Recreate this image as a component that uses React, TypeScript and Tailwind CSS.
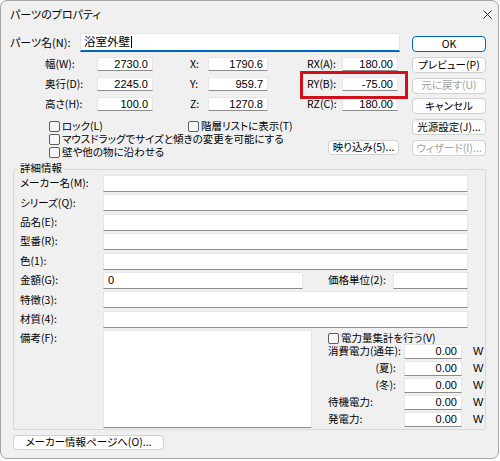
// パーツのプロパティ dialog
import type { ReactNode } from "react";

const num = "font-['Liberation_Sans',Arial,sans-serif] text-[11px]";

function Box({
  w,
  h = "h-[14px]",
  value = "",
  left = false,
  className = "",
}: {
  w: string;
  h?: string;
  value?: string;
  left?: boolean;
  className?: string;
}) {
  return (
    <div
      className={`${w} ${h} shrink-0 bg-white border border-[#e6e6e6] border-b-[#8c8c8c] flex items-center ${
        left ? "justify-start pl-[4px]" : "justify-end pr-[4px]"
      } ${num} ${className}`}
    >
      {value}
    </div>
  );
}

function Check({ children }: { children: ReactNode }) {
  return (
    <div className="flex items-center gap-[2px] whitespace-nowrap h-[12px]">
      <span className="w-[11px] h-[11px] shrink-0 rounded-[2px] border border-[#5e5e5e] bg-[#f7f7f7]" />
      <span className="text-[10.5px] leading-[12px]">{children}</span>
    </div>
  );
}

function Btn({
  children,
  w = "w-[74px]",
  h = "h-[16px]",
  primary = false,
  disabled = false,
  className = "",
}: {
  children: ReactNode;
  w?: string;
  h?: string;
  primary?: boolean;
  disabled?: boolean;
  className?: string;
}) {
  return (
    <div
      className={`${w} ${h} shrink-0 rounded-[4px] flex items-center justify-center whitespace-nowrap ${
        primary
          ? "border-[1.5px] border-[#0067c0] bg-[#fdfdfd]"
          : "border border-[#d2d2d2] bg-[#fdfdfd]"
      } ${disabled ? "text-[#a3a3a3]" : "text-black"} ${className}`}
    >
      {children}
    </div>
  );
}

function CoordRow({
  a,
  av,
  b,
  bv,
  c,
  cv,
}: {
  a: string;
  av: string;
  b: string;
  bv: string;
  c: string;
  cv: string;
}) {
  return (
    <div className="flex items-center h-[14px]">
      <span className="pl-[44px] w-[96px] shrink-0">{a}</span>
      <Box w="w-[56px]" value={av} />
      <span className="ml-[37px] w-[18px] shrink-0">{b}</span>
      <Box w="w-[60px]" value={bv} />
      <span className="ml-[39px] w-[35px] shrink-0">{c}</span>
      <Box w="w-[56px]" value={cv} />
    </div>
  );
}

function DetailRow({ label, children }: { label: string; children?: ReactNode }) {
  return (
    <div className="flex items-center h-[17px]">
      <span className="w-[83px] shrink-0">{label}</span>
      {children ?? <Box w="w-[365px]" h="h-[17px]" />}
    </div>
  );
}

function PowerRow({ label, right = false }: { label: string; right?: boolean }) {
  return (
    <div className="flex items-center h-[15px]">
      <span className={`w-[76px] shrink-0 whitespace-nowrap ${right ? "text-right pr-[8px]" : ""}`}>
        {label}
      </span>
      <Box w="w-[58px]" h="h-[15px]" value="0.00" />
      <span className={`ml-[11px] ${num}`}>W</span>
    </div>
  );
}

export default function App() {
  return (
    <div className="w-[500px] h-[461px] bg-white text-black text-[10.5px] leading-none font-['Noto_Sans_CJK_JP','Noto_Sans',sans-serif] [font-feature-settings:'palt']">
      <div className="w-[499px] h-[459px] border border-[#a5a5a5] rounded-[7px] bg-[#f0f0f0] flex flex-col overflow-hidden">
        {/* Title bar */}
        <div className="h-[26px] shrink-0 flex items-center pl-[9px] pr-[6px] text-[11px]">
          <span>パーツのプロパティ</span>
          <svg className="ml-auto" width="9" height="9" viewBox="0 0 9 9">
            <path d="M0.5 0.5 L8.5 8.5 M8.5 0.5 L0.5 8.5" stroke="#2b2b2b" strokeWidth="1" />
          </svg>
        </div>

        {/* Top section */}
        <div className="flex h-[132px] shrink-0">
          <div className="w-[411px] shrink-0 pt-[6px] relative">
            <div className="flex items-center h-[19px]">
              <span className="pl-[9px] w-[79px] shrink-0 text-[11px]">パーツ名(N):</span>
              <div className="w-[320px] h-[19px] bg-white border border-[#e6e6e6] border-b-2 border-b-[#0067c0] flex items-center pl-[3px] text-[11.5px]">
                浴室外壁
                <span className="w-px h-[12px] bg-black ml-[1px]" />
              </div>
            </div>

            <div className="mt-[5px] flex flex-col gap-[6px]">
              <CoordRow a="幅(W):" av="2730.0" b="X:" bv="1790.6" c="RX(A):" cv="180.00" />
              <CoordRow a="奥行(D):" av="2245.0" b="Y:" bv="959.7" c="RY(B):" cv="-75.00" />
              <CoordRow a="高さ(H):" av="100.0" b="Z:" bv="1270.8" c="RZ(C):" cv="180.00" />
            </div>

            {/* highlight around RY */}
            <div className="absolute left-[299px] top-[44px] w-[108px] h-[28px] border-[3px] border-[#d0101a]" />

            <div className="mt-[9px] pl-[48px] flex flex-col gap-[1px]">
              <div className="flex items-center">
                <div className="w-[139px] shrink-0">
                  <Check>ロック(L)</Check>
                </div>
                <Check>階層リストに表示(T)</Check>
              </div>
              <div className="flex items-start">
                <div className="flex flex-col gap-[1px]">
                  <Check>マウスドラッグでサイズと傾きの変更を可能にする</Check>
                  <Check>壁や他の物に沿わせる</Check>
                </div>
                <Btn w="w-[71px]" h="h-[15px]" className="ml-auto mr-[13px] mt-[7px]">
                  映り込み(5)...
                </Btn>
              </div>
            </div>
          </div>

          <div className="w-[74px] shrink-0 pt-[9px] flex flex-col gap-[4.8px]">
            <Btn primary>OK</Btn>
            <Btn>プレビュー(P)</Btn>
            <Btn disabled>元に戻す(U)</Btn>
            <Btn>キャンセル</Btn>
            <Btn>光源設定(J)...</Btn>
            <Btn disabled>ウィザード(I)...</Btn>
          </div>
        </div>

        {/* Detail group */}
        <div className="ml-[12px] mt-[10px] w-[473px] h-[261px] shrink-0 relative border border-[#d8d8d8] rounded-[2px] pt-[5px] pl-[6px]">
          <span className="absolute left-[4px] -top-[7px] px-[2px] bg-[#f0f0f0]">詳細情報</span>
          <div className="flex flex-col gap-[2.4px]">
            <DetailRow label="メーカー名(M):" />
            <DetailRow label="シリーズ(Q):" />
            <DetailRow label="品名(E):" />
            <DetailRow label="型番(R):" />
            <DetailRow label="色(1):" />
            <DetailRow label="金額(G):">
              <Box w="w-[200px]" h="h-[17px]" value="0" left />
              <span className="ml-[25px] w-[65px] shrink-0">価格単位(2):</span>
              <Box w="w-[75px]" h="h-[17px]" />
            </DetailRow>
            <DetailRow label="特徴(3):" />
            <DetailRow label="材質(4):" />
            <div className="flex">
              <span className="w-[83px] shrink-0 pt-[3px]">備考(F):</span>
              <div className="w-[209px] h-[98px] shrink-0 bg-white border border-[#e6e6e6] border-b-[#8c8c8c]" />
              <div className="ml-[16px] flex flex-col">
                <div className="flex items-center h-[12px] mt-[2px]">
                  <Check>電力量集計を行う(V)</Check>
                </div>
                <div className="flex flex-col gap-[2px]">
                  <PowerRow label="消費電力(通年):" />
                  <PowerRow label="(夏):" right />
                  <PowerRow label="(冬):" right />
                  <PowerRow label="待機電力:" />
                  <PowerRow label="発電力:" />
                </div>
              </div>
            </div>
          </div>
        </div>

        <Btn w="w-[151px]" h="h-[15px]" className="ml-[12px] mt-[5px]">
          メーカー情報ページへ(O)...
        </Btn>
      </div>
    </div>
  );
}
